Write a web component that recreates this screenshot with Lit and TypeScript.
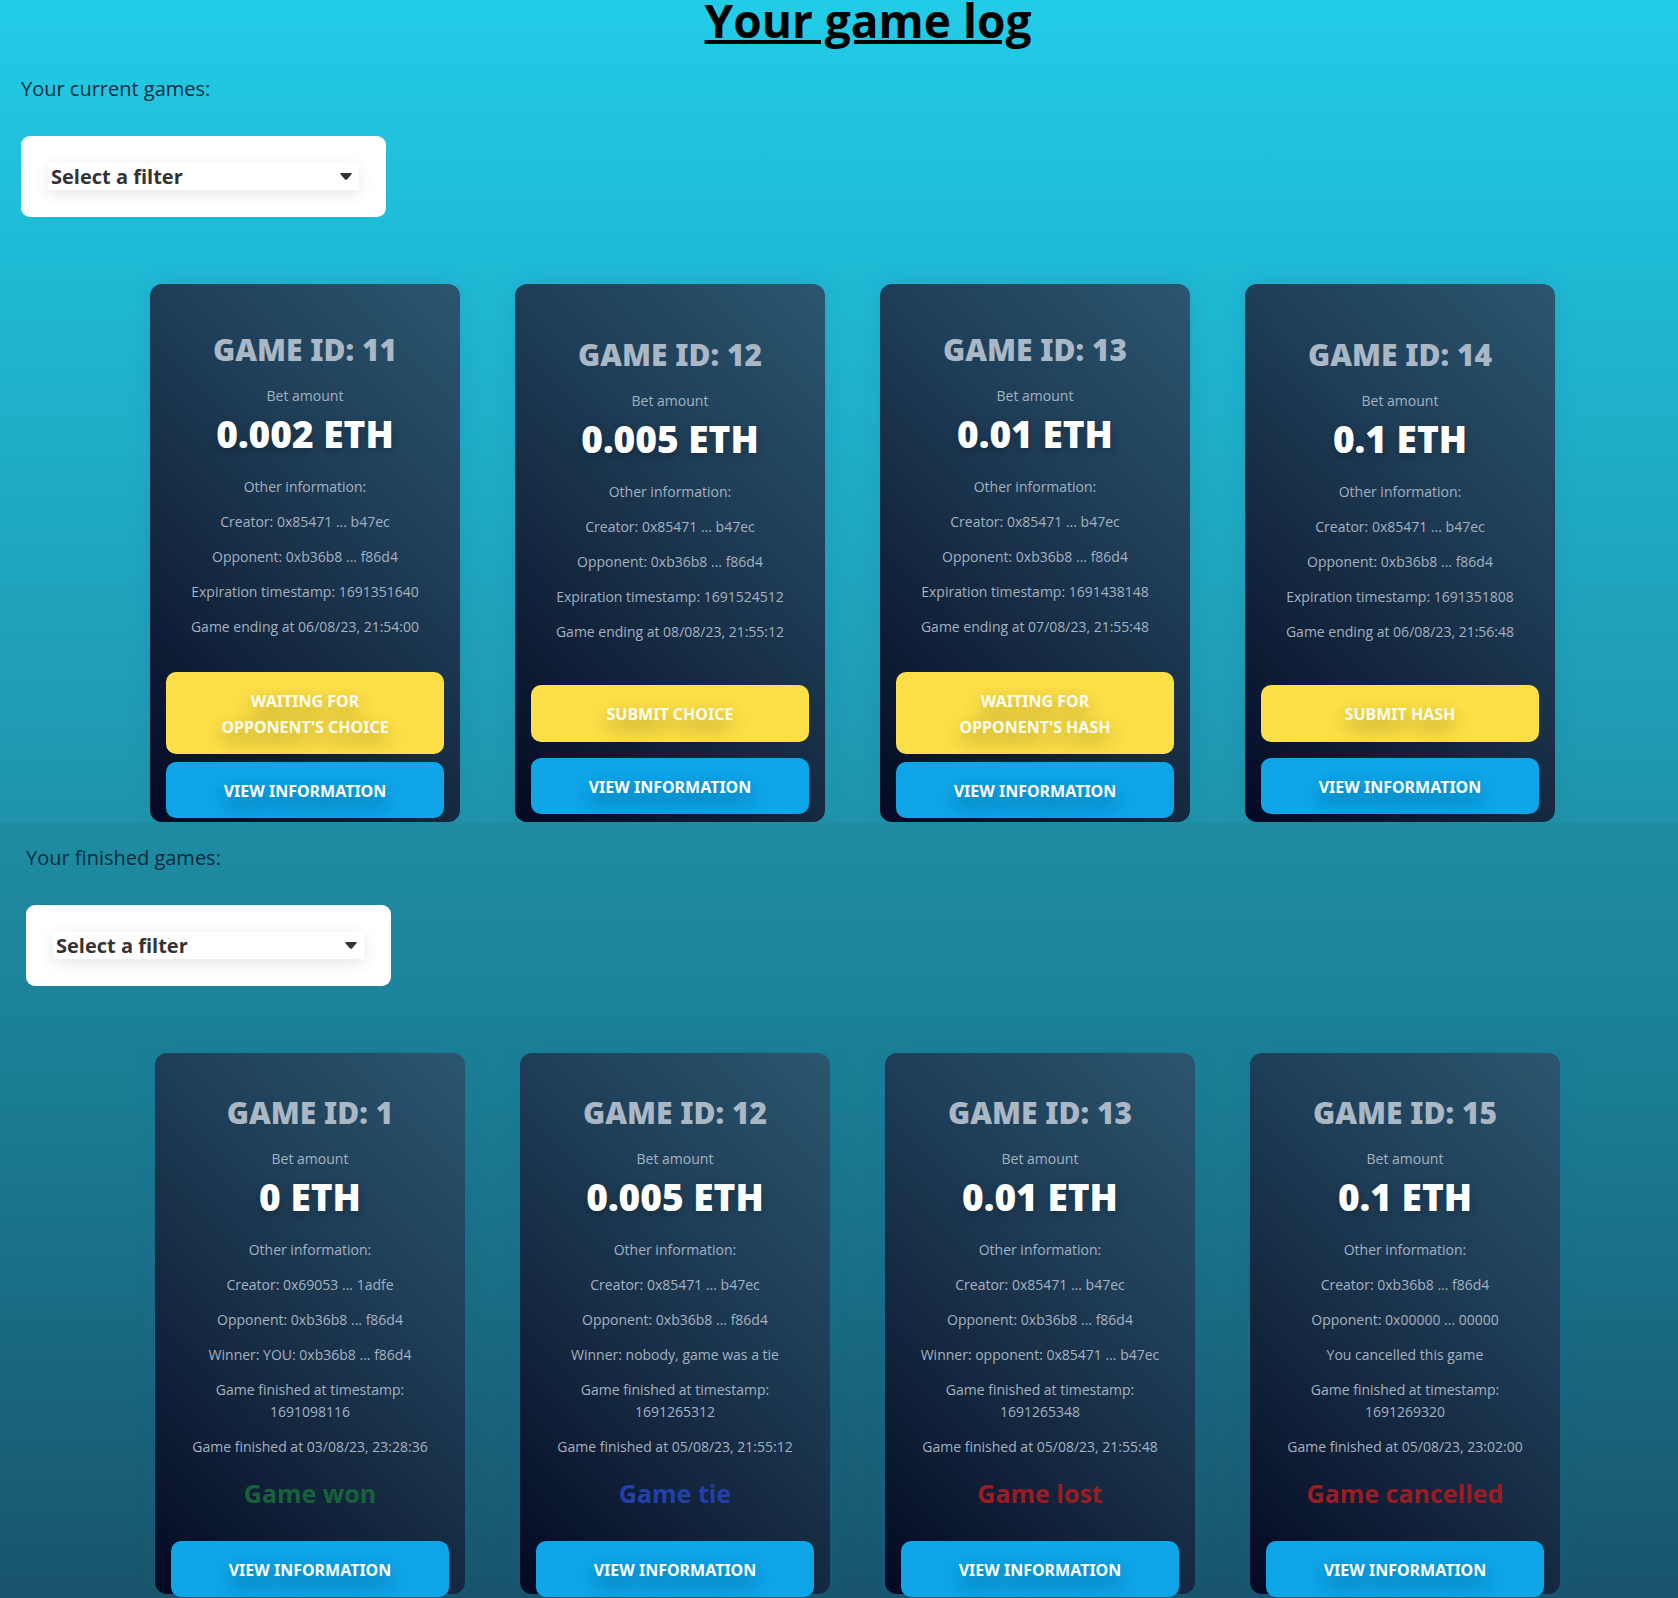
import { LitElement, html, css, nothing } from "lit";
import { customElement, property } from "lit/decorators.js";
import { classMap } from "lit/directives/class-map.js";

type Tone = "won" | "tie" | "lost";

interface Game {
  id: number;
  bet: string;
  info: string[];
  action?: string;
  result?: { text: string; tone: Tone };
}

const currentGames: Game[] = [
  {
    id: 11,
    bet: "0.002 ETH",
    info: [
      "Creator: 0x85471 ... b47ec",
      "Opponent: 0xb36b8 ... f86d4",
      "Expiration timestamp: 1691351640",
      "Game ending at 06/08/23, 21:54:00",
    ],
    action: "Waiting for opponent's choice",
  },
  {
    id: 12,
    bet: "0.005 ETH",
    info: [
      "Creator: 0x85471 ... b47ec",
      "Opponent: 0xb36b8 ... f86d4",
      "Expiration timestamp: 1691524512",
      "Game ending at 08/08/23, 21:55:12",
    ],
    action: "Submit choice",
  },
  {
    id: 13,
    bet: "0.01 ETH",
    info: [
      "Creator: 0x85471 ... b47ec",
      "Opponent: 0xb36b8 ... f86d4",
      "Expiration timestamp: 1691438148",
      "Game ending at 07/08/23, 21:55:48",
    ],
    action: "Waiting for opponent's hash",
  },
  {
    id: 14,
    bet: "0.1 ETH",
    info: [
      "Creator: 0x85471 ... b47ec",
      "Opponent: 0xb36b8 ... f86d4",
      "Expiration timestamp: 1691351808",
      "Game ending at 06/08/23, 21:56:48",
    ],
    action: "Submit hash",
  },
];

const finishedGames: Game[] = [
  {
    id: 1,
    bet: "0 ETH",
    info: [
      "Creator: 0x69053 ... 1adfe",
      "Opponent: 0xb36b8 ... f86d4",
      "Winner: YOU: 0xb36b8 ... f86d4",
      "Game finished at timestamp: 1691098116",
      "Game finished at 03/08/23, 23:28:36",
    ],
    result: { text: "Game won", tone: "won" },
  },
  {
    id: 12,
    bet: "0.005 ETH",
    info: [
      "Creator: 0x85471 ... b47ec",
      "Opponent: 0xb36b8 ... f86d4",
      "Winner: nobody, game was a tie",
      "Game finished at timestamp: 1691265312",
      "Game finished at 05/08/23, 21:55:12",
    ],
    result: { text: "Game tie", tone: "tie" },
  },
  {
    id: 13,
    bet: "0.01 ETH",
    info: [
      "Creator: 0x85471 ... b47ec",
      "Opponent: 0xb36b8 ... f86d4",
      "Winner: opponent: 0x85471 ... b47ec",
      "Game finished at timestamp: 1691265348",
      "Game finished at 05/08/23, 21:55:48",
    ],
    result: { text: "Game lost", tone: "lost" },
  },
  {
    id: 15,
    bet: "0.1 ETH",
    info: [
      "Creator: 0xb36b8 ... f86d4",
      "Opponent: 0x00000 ... 00000",
      "You cancelled this game",
      "Game finished at timestamp: 1691269320",
      "Game finished at 05/08/23, 23:02:00",
    ],
    result: { text: "Game cancelled", tone: "lost" },
  },
];

@customElement("game-card")
class GameCard extends LitElement {
  @property({ attribute: false }) game!: Game;

  static styles = css`
    :host {
      display: flex;
    }
    .card {
      flex: 1;
      display: flex;
      flex-direction: column;
      justify-content: center;
      box-sizing: border-box;
      padding: 46px 16px 4px;
      border-radius: 12px;
      background: linear-gradient(45deg, #040923, #14283f 36%, #1f3e58 64%, #2b566f);
      box-shadow: 0 0 20px rgba(28, 110, 165, 0.2);
      color: #a4b2c0;
      text-align: center;
    }
    .finished {
      justify-content: flex-start;
      padding: 40px 16px 0;
    }
    .title {
      margin: 0 0 16px;
      font-family: "Noto Sans", "Open Sans", sans-serif;
      font-size: 30px;
      line-height: 40px;
      font-weight: 900;
      text-transform: uppercase;
      color: #aab7c5;
    }
    .caption,
    .info {
      margin: 0;
      font-size: 14px;
      line-height: 22px;
    }
    .caption {
      line-height: 20px;
    }
    .bet {
      margin: 8px 0 22px;
      font-family: "Noto Sans", "Open Sans", sans-serif;
      font-size: 37px;
      line-height: 40px;
      font-weight: 900;
      color: #fff;
      text-shadow: 0 3px 8px rgba(0, 0, 0, 0.25);
    }
    .details {
      display: flex;
      flex-direction: column;
      gap: 13px;
      padding: 0 32px;
    }
    .line {
      margin: 0 -32px;
    }
    .result {
      margin: 15px 0 0;
      font-size: 25px;
      line-height: 40px;
      font-weight: 700;
    }
    .won {
      color: #17623a;
    }
    .tie {
      color: #2340ad;
    }
    .lost {
      color: #9b1c22;
    }
    .actions {
      display: flex;
      flex-direction: column;
      gap: 8px;
      margin-top: 34px;
    }
    .finished .actions {
      margin: 28px 0 -3px;
    }
    .button {
      padding: 16px 44px 14px;
      border: 0;
      border-radius: 10px;
      background: #0ea5e9;
      color: #fff;
      font-family: "Noto Sans", "Open Sans", sans-serif;
      font-size: 16px;
      line-height: 26px;
      font-weight: 700;
      text-transform: uppercase;
      text-shadow: 0 8px 20px rgba(0, 0, 0, 0.45);
      cursor: pointer;
    }
    .status {
      background: #fde047;
      color: #fffdf0;
    }
    .submit {
      margin: 8px 0;
      padding-bottom: 15px;
    }
  `;

  render() {
    const { id, bet, info, action, result } = this.game;
    return html`
      <article class=${classMap({ card: true, finished: !!result })}>
        <h2 class="title">Game ID: ${id}</h2>
        <p class="caption">Bet amount</p>
        <p class="bet">${bet}</p>
        <div class="details">
          <p class="info">Other information:</p>
          ${info.map(
            (text) => html`<p
              class=${classMap({ info: true, line: !text.includes("finished at timestamp") })}
            >
              ${text}
            </p>`
          )}
        </div>
        ${result ? html`<p class="result ${result.tone}">${result.text}</p>` : nothing}
        <div class="actions">
          ${action
            ? html`<button
                type="button"
                class=${classMap({
                  button: true,
                  status: true,
                  submit: action.startsWith("Submit"),
                })}
              >
                ${action}
              </button>`
            : nothing}
          <button type="button" class="button">View information</button>
        </div>
      </article>
    `;
  }
}

@customElement("game-filter")
class GameFilter extends LitElement {
  @property() label = "";

  static styles = css`
    :host {
      display: block;
    }
    .label {
      display: block;
      margin-bottom: 31px;
      font-size: 20px;
      line-height: 32px;
      color: #0b2b3c;
    }
    .panel {
      box-sizing: border-box;
      width: 365px;
      max-width: 100%;
      padding: 27px;
      border-radius: 9px;
      background: #fff;
    }
    .field {
      display: flex;
      align-items: center;
      padding-right: 7px;
      background: #fff;
      box-shadow: 0 4px 16px rgba(0, 0, 0, 0.1);
    }
    .select {
      flex: 1;
      height: 27px;
      margin-right: -12px;
      padding: 0 16px 0 3px;
      border: 0;
      appearance: none;
      background: transparent;
      color: #333;
      font: inherit;
      font-size: 20px;
      line-height: 27px;
      font-weight: 700;
    }
    .caret {
      width: 12px;
      height: 7px;
      fill: #333;
      pointer-events: none;
    }
  `;

  render() {
    return html`
      <label class="label" for="filter">${this.label}</label>
      <div class="panel">
        <div class="field">
          <select class="select" id="filter">
            <option>Select a filter</option>
          </select>
          <svg class="caret" viewBox="0 0 12 7" aria-hidden="true">
            <path d="M1 0h10q1.300 0 .7 1L7 6.400q-1 .9-2 0L.3 1Q-.3 0 1 0z" />
          </svg>
        </div>
      </div>
    `;
  }
}

@customElement("app-root")
class AppRoot extends LitElement {
  static styles = css`
    :host {
      display: block;
      font-family: "Open Sans", "Noto Sans", sans-serif;
    }
    .page {
      display: flex;
      flex-direction: column;
      min-height: 100vh;
    }
    .current {
      background: linear-gradient(#22cce7, #1fb8d3 35%, #1f94ab);
    }
    .finished {
      flex: 1;
      padding: 20px 0 3px;
      background: linear-gradient(#1e8ca3, #1a7d94 35%, #18546b);
    }
    .heading {
      margin: 0 0 33px;
      padding-left: 58px;
      font-size: 46px;
      line-height: 40px;
      font-weight: 700;
      text-align: center;
      text-decoration: underline;
      text-decoration-thickness: 4px;
      color: #000;
    }
    .filter {
      padding-left: 21px;
    }
    .finished .filter {
      padding-left: 26px;
    }
    .cards {
      display: grid;
      grid-template-columns: repeat(auto-fit, 310px);
      justify-content: center;
      gap: 55px;
      margin-top: 67px;
      padding-left: 27px;
    }
    .finished .cards {
      padding-left: 37px;
    }
  `;

  render() {
    return html`
      <main class="page">
        <section class="current">
          <h1 class="heading">Your game log</h1>
          <game-filter class="filter" label="Your current games:"></game-filter>
          <div class="cards">
            ${currentGames.map((game) => html`<game-card .game=${game}></game-card>`)}
          </div>
        </section>
        <section class="finished">
          <game-filter class="filter" label="Your finished games:"></game-filter>
          <div class="cards">
            ${finishedGames.map((game) => html`<game-card .game=${game}></game-card>`)}
          </div>
        </section>
      </main>
    `;
  }
}
